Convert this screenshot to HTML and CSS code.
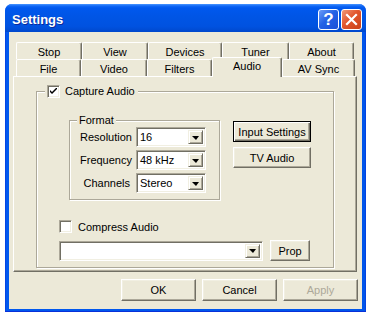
FILE: index.html
```html
<!DOCTYPE html>
<html lang="en">
<head>
    <meta charset="UTF-8">
    <title>Settings</title>
    <link rel="stylesheet" href="styles.css">
</head>
<body>
    <div class="window">
        <!-- Title bar -->
        <div class="titlebar">
            <span class="title">Settings</span>
            <div class="caption-btns">
                <button class="cap help">?</button>
                <button class="cap close">
                    <svg width="13" height="13" viewBox="0 0 13 13">
                        <path d="M2 2 L11 11 M11 2 L2 11" stroke="#fff" stroke-width="2.2" stroke-linecap="square"/>
                    </svg>
                </button>
            </div>
        </div>

        <div class="client">
            <!-- Tabs -->
            <div class="tabs">
                <div class="tab-row back">
                    <div class="tab">Stop</div>
                    <div class="tab">View</div>
                    <div class="tab">Devices</div>
                    <div class="tab">Tuner</div>
                    <div class="tab">About</div>
                </div>
                <div class="tab-row front">
                    <div class="tab">File</div>
                    <div class="tab">Video</div>
                    <div class="tab">Filters</div>
                    <div class="tab selected">Audio</div>
                    <div class="tab">AV Sync</div>
                </div>
            </div>

            <div class="panel">
                <fieldset class="group capture">
                    <legend class="check-legend">
                        <span class="checkbox checked">
                            <svg width="7" height="7" viewBox="0 0 7 7"><path d="M0 2 L0 4 L2 6 L7 1 L7 -1 L2 4 Z" fill="#000"/></svg>
                        </span>
                        Capture Audio
                    </legend>

                    <div class="capture-top">
                        <fieldset class="group format">
                            <legend class="text-legend">Format</legend>
                            <div class="format-grid">
                                <span class="field-label">Resolution</span>
                                <div class="combo"><span class="combo-text">16</span><span class="combo-btn"><i class="arrow"></i></span></div>
                                <span class="field-label">Frequency</span>
                                <div class="combo"><span class="combo-text">48 kHz</span><span class="combo-btn"><i class="arrow"></i></span></div>
                                <span class="field-label">Channels</span>
                                <div class="combo"><span class="combo-text">Stereo</span><span class="combo-btn"><i class="arrow"></i></span></div>
                            </div>
                        </fieldset>
                        <div class="side-btns">
                            <button class="btn default">Input Settings</button>
                            <button class="btn">TV Audio</button>
                        </div>
                    </div>

                    <div class="check-row">
                        <span class="checkbox"></span>
                        Compress Audio
                    </div>

                    <div class="codec-row">
                        <div class="combo wide"><span class="combo-text"></span><span class="combo-btn"><i class="arrow"></i></span></div>
                        <button class="btn prop">Prop</button>
                    </div>
                </fieldset>
            </div>

            <div class="dialog-btns">
                <button class="btn dlg">OK</button>
                <button class="btn dlg">Cancel</button>
                <button class="btn dlg" disabled>Apply</button>
            </div>
        </div>
    </div>
</body>
</html>
```

FILE: styles.css
```css
/* Reset */
* {
    box-sizing: border-box;
}

body {
    margin: 0;
    background: #fff;
    font-family: 'Liberation Sans', Arial, sans-serif;
    font-size: 11px;
    color: #000;
}

button {
    font: inherit;
    color: inherit;
    margin: 0;
    padding: 0;
}

/* Window frame */
.window {
    width: 361px;
    height: 308px;
    margin: 4px 0 0 5px;
    display: flex;
    flex-direction: column;
    background: linear-gradient(to right, #0831d9 0, #0058ee 1px, #0055ea calc(100% - 1px), #0831d9 100%);
    border-bottom: 1px solid #0831d9;
    border-radius: 7px 7px 0 0;
}

.titlebar {
    height: 28px;
    display: flex;
    align-items: flex-start;
    padding: 5px 4px 0 7px;
    border-radius: 7px 7px 0 0;
    background: linear-gradient(#4a96ff 0, #1168f5 2px, #0058ee 4px, #0055e5 45%, #0052e0 80%, #0048cc 100%);
}

.title {
    font-weight: bold;
    font-size: 13px;
    line-height: 17px;
    padding-top: 2px;
    color: #fff;
    text-shadow: 1px 1px #0a2a9c;
}

.caption-btns {
    margin-left: auto;
    display: flex;
    gap: 2px;
}

.cap {
    width: 21px;
    height: 21px;
    border: 1px solid #fff;
    border-radius: 3px;
    display: flex;
    align-items: center;
    justify-content: center;
}

.help {
    background: linear-gradient(135deg, #6a9cf7 0, #2462e6 45%, #1a50d8 100%);
    color: #fff;
    font-weight: bold;
    font-size: 17px;
    line-height: 19px;
}

.close {
    background: linear-gradient(135deg, #f09a78 0, #e2552c 45%, #c94219 100%);
}

/* Client area */
.client {
    flex: 1;
    margin: 0 4px 2px;
    background: #ece9d8;
    padding: 10px 4px 0 4px;
}

/* Tabs */
.tabs {
    padding-left: 3px;
}

.tab-row {
    display: flex;
    align-items: flex-start;
    height: 17px;
}

.tab {
    height: 17px;
    padding-top: 3px;
    line-height: 13px;
    text-align: center;
    background: #ece9d8;
    border-top: 1px solid #fff;
    border-left: 1px solid #fff;
    border-right: 1px solid #716f64;
    border-radius: 2px 2px 0 0;
    box-shadow: inset -1px 0 #aca899;
}

.back .tab:nth-child(1) { width: 66px; }
.back .tab:nth-child(2) { width: 66px; }
.back .tab:nth-child(3) { width: 74px; }
.back .tab:nth-child(4) { width: 67px; }
.back .tab:nth-child(5) { width: 65px; }

.front .tab:nth-child(1) { width: 65px; }
.front .tab:nth-child(2) { width: 66px; }
.front .tab:nth-child(3) { width: 65px; }
.front .tab:nth-child(4) { width: 70px; }
.front .tab:nth-child(5) { width: 73px; }

.tab.selected {
    height: 20px;
    margin-top: -2px;
    padding-top: 2px;
    position: relative;
    z-index: 1;
}

/* Tab panel */
.panel {
    width: 344px;
    height: 196px;
    border: 1px solid;
    border-color: #fff #716f64 #716f64 #fff;
    box-shadow: inset -1px -1px #aca899;
    padding: 7px 22px 0 22px;
}

/* Group boxes */
.group {
    margin: 0;
    min-width: 0;
    border: 1px solid #aca899;
    box-shadow: inset 1px 1px #fff, 1px 1px #fff;
}

.capture {
    padding: 0 10px 6px 22px;
}

.check-legend {
    display: flex;
    align-items: center;
    gap: 5px;
    height: 14px;
    margin-left: -14px;
    padding: 0 3px 0 2px;
    background: #ece9d8;
}

.text-legend {
    margin-left: -3px;
    padding: 0 2px;
    line-height: 13px;
    background: #ece9d8;
}

.checkbox {
    width: 13px;
    height: 13px;
    flex: none;
    background: #fff;
    border: 1px solid;
    border-color: #aca899 #fff #fff #aca899;
    box-shadow: inset 1px 1px #716f64, inset -1px -1px #f1efe2;
    display: flex;
    align-items: center;
    justify-content: center;
}

.capture-top {
    display: flex;
    align-items: flex-start;
    margin-top: 16px;
    padding-left: 10px;
}

.format {
    width: 151px;
    padding: 0 13px 6px 10px;
}

.format-grid {
    display: grid;
    grid-template-columns: 50px 70px;
    column-gap: 6px;
    row-gap: 3px;
    align-items: center;
}

.field-label {
    text-align: right;
    white-space: nowrap;
}

/* Combo boxes */
.combo {
    height: 20px;
    display: flex;
    background: #fff;
    border: 1px solid;
    border-color: #aca899 #fff #fff #aca899;
    box-shadow: inset 1px 1px #716f64, inset -1px -1px #f1efe2;
    padding: 2px;
}

.combo-text {
    flex: 1;
    padding-left: 1px;
    line-height: 14px;
}

.combo-btn {
    width: 15px;
    background: #ece9d8;
    border: 1px solid;
    border-color: #f1efe2 #716f64 #716f64 #f1efe2;
    box-shadow: inset 1px 1px #fff, inset -1px -1px #aca899;
    display: flex;
    align-items: center;
    justify-content: center;
}

.arrow {
    width: 0;
    height: 0;
    border-left: 4px solid transparent;
    border-right: 3px solid transparent;
    border-top: 4px solid #000;
    margin-top: 1px;
}

.combo.wide {
    width: 204px;
}

/* Buttons */
.btn {
    background: #ece9d8;
    border: 1px solid;
    border-color: #fff #716f64 #716f64 #fff;
    box-shadow: inset -1px -1px #aca899, inset 1px 1px #f1efe2;
    text-align: center;
}

.btn.default {
    border: 1px solid #000;
    box-shadow: inset 1px 1px #fff, inset -1px -1px #716f64, inset -2px -2px #aca899;
}

.btn:disabled {
    color: #aca899;
}

.side-btns {
    display: flex;
    flex-direction: column;
    gap: 5px;
    margin: 7px 0 0 13px;
}

.side-btns .btn {
    width: 78px;
    height: 21px;
}

.check-row {
    display: flex;
    align-items: center;
    gap: 6px;
    height: 13px;
    margin-top: 20px;
}

.codec-row {
    display: flex;
    align-items: center;
    gap: 7px;
    margin-top: 7px;
}

.btn.prop {
    width: 40px;
    height: 21px;
}

/* Dialog buttons */
.dialog-btns {
    display: flex;
    justify-content: flex-end;
    gap: 6px;
    margin-top: 7px;
}

.btn.dlg {
    width: 75px;
    height: 22px;
}
```
